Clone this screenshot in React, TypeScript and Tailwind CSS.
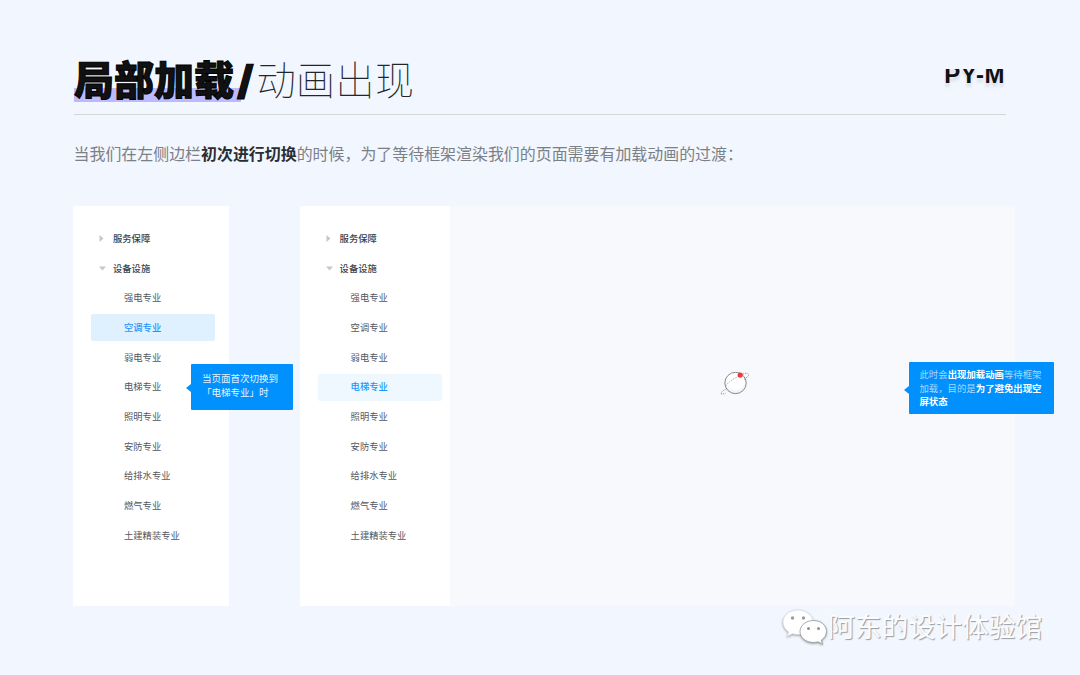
const CJK = "font-['Inter','Noto_Sans_CJK_SC',sans-serif]";

const SUB_ITEMS = [
  "强电专业",
  "空调专业",
  "弱电专业",
  "电梯专业",
  "照明专业",
  "安防专业",
  "给排水专业",
  "燃气专业",
  "土建精装专业",
];

function GroupRow({ label, open }: { label: string; open?: boolean }) {
  return (
    <div className="flex h-[29.7px] items-center pl-[26px] text-[9.3px] font-medium text-[#3c4147]">
      <span className="flex w-[14px] items-center">
        {open ? (
          <svg width="7" height="5" viewBox="0 0 7 5">
            <path d="M0 .5h7L3.5 4.5z" fill="#c4c8ce" />
          </svg>
        ) : (
          <svg width="5" height="7" viewBox="0 0 5 7">
            <path d="M.5 0v7l4-3.5z" fill="#c4c8ce" />
          </svg>
        )}
      </span>
      {label}
    </div>
  );
}

function SideMenu({
  width,
  active,
  activeClass,
}: {
  width: string;
  active: string;
  activeClass: string;
}) {
  return (
    <div className={`h-full shrink-0 bg-white pt-[18px] ${width}`}>
      <GroupRow label="服务保障" />
      <GroupRow label="设备设施" open />
      {SUB_ITEMS.map((item) => (
        <div key={item} className="flex h-[29.7px] items-center">
          <div
            className={`ml-[18px] flex h-[27px] w-[124px] items-center rounded-[2px] pl-[33px] text-[9.3px] ${
              item === active ? activeClass : "text-[#53585f]"
            }`}
          >
            {item}
          </div>
        </div>
      ))}
    </div>
  );
}

function LoadingPlanet() {
  return (
    <svg width="32" height="26" viewBox="0 0 34 28" className="block">
      <defs>
        <radialGradient id="ball" cx="0.5" cy="0.35" r="0.75">
          <stop offset="0.55" stopColor="#ffffff" />
          <stop offset="1" stopColor="#dfe2e6" />
        </radialGradient>
      </defs>
      <circle cx="16.5" cy="14" r="11.5" fill="url(#ball)" stroke="#7d838a" strokeWidth="1" />
      <path
        d="M24 4.500c3-1.200 6-1.200 6.600 0 .6 1.400-1.500 3.300-5 5.700M7 20c-3.500 2.200-6 3.400-6.300 5-.2 1.200 2.500 1 5.300 0"
        fill="none"
        stroke="#6e747b"
        strokeWidth="0.8"
        strokeDasharray="1.5 1.2"
      />
      <path d="M6 17C10 12 15 8.500 22 6" fill="none" stroke="#8b9096" strokeWidth="0.8" strokeDasharray="1.5 1.2" />
      <circle cx="21.5" cy="5.500" r="2.800" fill="#f0393c" />
    </svg>
  );
}

function WeChatLogo() {
  return (
    <svg width="46" height="36" viewBox="0 0 46 36" className="block drop-shadow-[0_1px_1px_rgba(90,90,90,0.55)]">
      <path
        d="M16 1C7.700 1 1 6.500 1 13.300c0 3.900 2.200 7.300 5.600 9.600L5 27.500l5.400-2.800c1.800.5 3.700.8 5.600.8 8.300 0 15-5.500 15-12.200S24.300 1 16 1z"
        fill="#fff"
        stroke="#d5d8dc"
        strokeWidth="0.6"
      />
      <path
        d="M31.500 11.500c-7.500 0-13.500 4.900-13.500 11s6 11 13.500 11c1.600 0 3.100-.2 4.500-.7l4.500 2.400-1.200-4c3-2 5.200-5.100 5.200-8.700 0-6.100-5.500-11-13-11z"
        fill="#fff"
        stroke="#8f9398"
        strokeWidth="0.8"
      />
      <circle cx="10.500" cy="9" r="1.700" fill="#9a9ea3" />
      <circle cx="21.500" cy="9" r="1.700" fill="#9a9ea3" />
      <circle cx="26.500" cy="19.500" r="1.500" fill="#8d9196" />
      <circle cx="36.500" cy="19.500" r="1.500" fill="#8d9196" />
    </svg>
  );
}

export default function App() {
  return (
    <div className={`relative h-[675px] w-[1080px] overflow-hidden bg-[#f2f7ff] ${CJK}`}>
      <div className="pl-[74px] pt-[54px]">
        <header className="flex h-[61px] w-[932px] justify-between border-b border-[#d5d6d9]">
          <h1 className="relative flex h-[52px] items-center pt-[2px] text-[40px] leading-[52px] text-[#111]">
            <span className="absolute bottom-[4px] left-0 h-[14px] w-[167px] bg-[#bcb9ff]" />
            <span className="relative font-black [-webkit-text-stroke:1px_#000]">局部加载</span>
            <span className="relative ml-[3px] mr-[3px] font-black [-webkit-text-stroke:1px_#000]">/</span>
            <span className="relative text-[39.4px] font-thin text-[#22262b]">动画出现</span>
          </h1>
          <div className="mr-[1px] mt-[15px] h-[21px] overflow-hidden text-[24px] font-bold leading-[17px] tracking-[0.5px] text-[#111] [font-family:'Liberation_Sans',sans-serif] [text-shadow:0_4px_3px_rgba(110,110,110,0.18)]">
            <span className="relative -top-[3px] block">PY-M</span>
          </div>
        </header>

        <p className="ml-[-0.5px] mt-[29px] h-[22px] text-[15.95px] leading-[22px] text-[#7b8087]">
          当我们在左侧边栏<strong className="font-bold text-[#2a2e33]">初次进行切换</strong>
          的时候，为了等待框架渲染我们的页面需要有加载动画的过渡：
        </p>

        <section className="mt-[40px] flex h-[400px] items-stretch">
          <div className="relative ml-[-1px] mr-[70.6px] h-full">
            <SideMenu width="w-[156px]" active="空调专业" activeClass="bg-[#dff0ff] font-medium text-[#1c96ff]" />
            <div className="absolute left-[118px] top-[158px] h-[46px] w-[102px] rounded-[1px] bg-[#0091ff] pl-[11px] pt-[8px] text-[9.5px] leading-[14px] text-[#e6f4ff]">
              <span className="absolute -left-[5px] top-[20px] h-0 w-0 border-y-[4px] border-r-[5px] border-y-transparent border-r-[#0091ff]" />
              当页面首次切换到
              <br />
              「电梯专业」时
            </div>
          </div>

          <SideMenu width="w-[150px]" active="电梯专业" activeClass="bg-[#eff7ff] font-medium text-[#1c96ff]" />

          <div className="relative flex h-full w-[565px] items-center justify-center bg-[#f7f9fc] pb-[46px] pl-[7px]">
            <LoadingPlanet />
            <div className="absolute left-[459.4px] top-[156px] h-[52px] w-[145px] rounded-[1px] bg-[#0091ff] pl-[10.5px] pt-[6px] text-[9.4px] leading-[13.5px] text-[#a9d8ff]">
              <span className="absolute -left-[5px] top-[24px] h-0 w-0 border-y-[4px] border-r-[5px] border-y-transparent border-r-[#0091ff]" />
              此时会<b className="font-bold text-white">出现加载动画</b>等待框架
              <br />
              加载，目的是<b className="font-bold text-white">为了避免出现空</b>
              <br />
              <b className="font-bold text-white">屏状态</b>
            </div>
          </div>
        </section>
      </div>

      <div className="absolute left-[782px] top-[609px] flex items-center">
        <WeChatLogo />
        <span className="text-[26.8px] leading-[36px] text-[#fbfcfe] [text-shadow:1px_1px_1px_rgba(80,80,80,0.55)]">
          阿东的设计体验馆
        </span>
      </div>
    </div>
  );
}
